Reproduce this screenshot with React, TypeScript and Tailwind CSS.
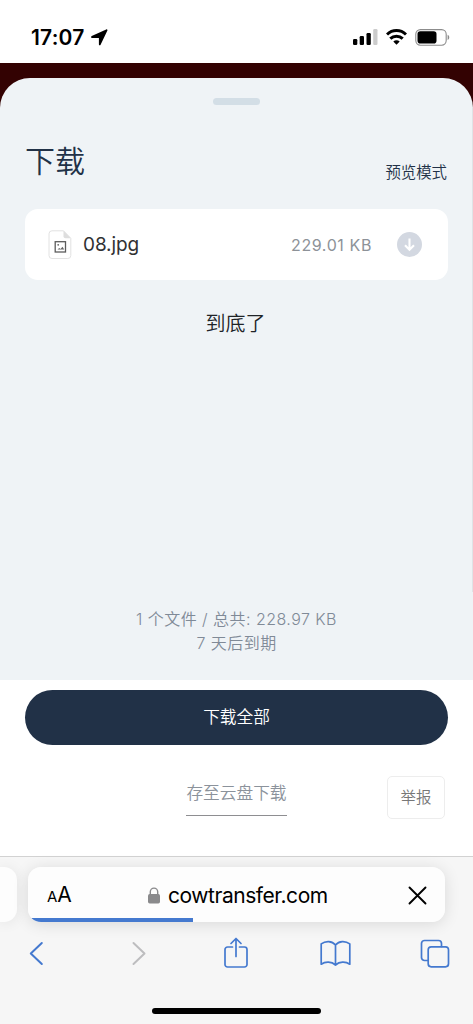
import type { ReactNode } from "react";

function StatusBar() {
  return (
    <header className="flex h-[63px] shrink-0 items-start justify-between bg-white pl-[31px] pr-[23px] text-black">
      <div className="flex items-center pt-[24px]">
        <span className="w-[54px] whitespace-nowrap text-[21px] font-semibold leading-[27px] tracking-[0.2px]">
          17:07
        </span>
        <svg className="ml-[6px] h-[17px] w-[17px]" viewBox="0 0 17 17" fill="currentColor">
          <path d="M15.200.400c.8-.3 1.500.4 1.200 1.200L9.600 15.800c-.4.9-1.700.7-1.700-.3V9H1.100C0 9-.3 7.600.7 7.100Z" />
        </svg>
      </div>

      <div className="flex items-start pt-[29px]">
        <svg className="h-[16px] w-[25px]" viewBox="0 0 25 16" fill="currentColor">
          <rect x="0" y="10" width="4.300" height="6" rx="1.200" />
          <rect x="6.700" y="7" width="4.300" height="9" rx="1.200" />
          <rect x="13.500" y="4" width="4.300" height="12" rx="1.200" />
          <rect x="20.200" y="0" width="4.300" height="16" rx="1.200" opacity="0.2" />
        </svg>
        <svg className="ml-[8px] h-[16px] w-[21px]" viewBox="0 0 21 16" fill="none" stroke="currentColor" strokeWidth="3">
          <path d="M1 5.500c5.400-5.200 13.600-5.200 19 0" />
          <path d="M4.300 9.700c3.500-3.400 8.900-3.400 12.400 0" />
          <path d="m10.500 15.700-3.200-3.200c1.800-1.600 4.600-1.600 6.400 0Z" fill="currentColor" stroke="none" />
        </svg>
        <svg className="ml-[8px] h-[17px] w-[35px]" viewBox="0 0 35 17" fill="none">
          <rect x="0.800" y="0.600" width="30.400" height="15.600" rx="4.600" stroke="#8c8c8c" strokeWidth="1.100" />
          <rect x="2.500" y="2.300" width="19" height="12.200" rx="2.800" fill="#000" />
          <path d="M32.600 5.800c2.200.8 2.200 4.400 0 5.200Z" fill="#8c8c8c" />
        </svg>
      </div>
    </header>
  );
}

function FileIcon() {
  return (
    <svg className="h-[30px] w-[24px]" viewBox="0 0 24 30" fill="none">
      <path
        d="M4 .8h11.500l7.300 7.500v17.200a3 3 0 0 1-3 3H4a3 3 0 0 1-3-3V3.800a3 3 0 0 1 3-3Z"
        fill="#fff"
        stroke="#e2e2e2"
      />
      <path d="M15.500.8v5.500a2 2 0 0 0 2 2h5.300Z" fill="#dedede" />
      <rect x="7.200" y="11.700" width="10.300" height="10.300" stroke="#5c5c5c" strokeWidth="1.300" />
      <circle cx="10.200" cy="14.800" r="0.900" fill="#666" />
      <path d="m9.500 19.600 1.700-1.500 1.300.9 2-2.200 1.700 2.800Z" fill="#666" />
    </svg>
  );
}

function FileRow() {
  return (
    <div className="mt-[29px] flex h-[71px] items-center rounded-[13px] bg-white pl-[23px] pr-[26px]">
      <FileIcon />
      <span className="ml-[11px] pt-px text-[19px] leading-6 tracking-[-0.1px] text-[#303133]">
        08.jpg
      </span>
      <span className="ml-auto mr-[25px] pt-px text-[16px] leading-6 tracking-[0.6px] text-[#8d9298]">
        229.01 KB
      </span>
      <button className="h-[25px] w-[25px]" aria-label="下载">
        <svg viewBox="0 0 25 25" fill="none">
          <circle cx="12.500" cy="12.500" r="12.500" fill="#d3d8e1" />
          <path d="M12.500 6.500v11M8 13.300l4.500 4.500 4.500-4.500" stroke="#fff" strokeWidth="2.100" />
        </svg>
      </button>
    </div>
  );
}

function DownloadSheet() {
  return (
    <div className="h-[617px] shrink-0 bg-[#330202] pt-[15px]">
      <main className="relative flex h-full flex-col rounded-t-[30px] bg-[#eff3f6] px-[25px]">
        <div className="absolute right-0 top-[30px] h-[484px] w-px bg-[#dfe3e6]" />
        <div className="mt-[20px] h-[7px] w-[47px] self-center rounded-full bg-[#d3dee6]" />
        <div className="mt-[35px] flex h-[40px] items-start justify-between">
          <h1 className="text-[30px] font-[350] leading-[43px] text-[#213147]">下载</h1>
          <button className="pr-px pt-[21px] text-[15.4px] font-[350] leading-[24px] text-[#213147]">
            预览模式
          </button>
        </div>
        <FileRow />
        <p className="mt-[30px] pr-[2px] text-center text-[20px] font-[350] leading-[28px] text-[#202327]">
          到底了
        </p>
        <div className="mt-auto pb-[25px] text-center text-[16px] font-[350] leading-[24px] tracking-[0.45px] text-[#808a97]">
          <p>1 个文件 / 总共: 228.97 KB</p>
          <p>7 天后到期</p>
        </div>
      </main>
    </div>
  );
}

function Actions() {
  return (
    <section className="h-[176px] shrink-0 bg-white px-[25px] pt-[10px]">
      <button className="h-[55px] w-full rounded-full bg-[#213147] text-[16.7px] font-[350] text-white">
        下载全部
      </button>
      <div className="mt-[31px] grid grid-cols-[1fr_auto_1fr] items-start pr-[3px]">
        <button className="col-start-2 ml-[3px] h-[40px] border-b-[1.500px] border-[#8e8e91] pb-[6px] text-[16.7px] font-[350] leading-[32px] text-[#8b929b]">
          存至云盘下载
        </button>
        <button className="h-[43px] w-[58px] justify-self-end rounded-[5px] border border-[#ededed] text-[15.4px] font-[350] text-[#777]">
          举报
        </button>
      </div>
    </section>
  );
}

function ToolbarIcon({ label, children }: { label: string; children: ReactNode }) {
  return (
    <button className="h-[34px] w-[34px]" aria-label={label}>
      <svg
        viewBox="0 0 34 34"
        fill="none"
        stroke="currentColor"
        strokeWidth="1.700"
        strokeLinecap="round"
        strokeLinejoin="round"
      >
        {children}
      </svg>
    </button>
  );
}

function BrowserBar() {
  return (
    <footer className="flex h-[168px] shrink-0 flex-col border-t border-[#d2d2d2] bg-[#f6f6f6]">
      <div className="mt-[10px] flex h-[55px] gap-[11px]">
        <div className="w-[17px] rounded-r-[13px] bg-[#fdfdfd] shadow-[0_1px_14px_rgba(0,0,0,0.08)]" />
        <div className="w-[417px] rounded-[13px] shadow-[0_2px_16px_rgba(0,0,0,0.12)]">
          <div className="flex h-full flex-col overflow-hidden rounded-[13px] bg-[#fdfdfd]">
            <div className="flex h-[51px] items-center pl-[19px] pr-[18px] pt-[5px] text-black">
              <span className="w-[38px] whitespace-nowrap pt-px leading-6">
                <span className="text-[15px]">A</span>
                <span className="text-[21px]">A</span>
              </span>
              <div className="ml-[63px] flex items-center">
                <svg className="h-[17px] w-[12px]" viewBox="0 0 12 17" fill="none">
                  <path d="M2.300 8V4.800a3.700 3.700 0 0 1 7.400 0V8" stroke="#8a8a8c" strokeWidth="1.400" />
                  <rect y="7" width="12" height="9.500" rx="1.700" fill="#8a8a8c" />
                </svg>
                <span className="ml-[8px] pt-px text-[21px] leading-6 tracking-[-0.45px]">
                  cowtransfer.com
                </span>
              </div>
              <svg className="ml-auto h-[19px] w-[19px]" viewBox="0 0 19 19" fill="none">
                <path d="m1.500 1.500 16 16m0-16-16 16" stroke="#000" strokeWidth="1.900" strokeLinecap="round" />
              </svg>
            </div>
            <div className="h-[4px] w-[165px] bg-[#4479cf]" />
          </div>
        </div>
      </div>

      <nav className="mt-[14px] flex h-[34px] justify-between pl-[19px] pr-[21px] text-[#4479cf]">
        <ToolbarIcon label="后退">
          <path d="M22.800 7 11.800 17.500l11 10.500" strokeWidth="2" />
        </ToolbarIcon>
        <ToolbarIcon label="前进">
          <path d="m14.500 7 11 10.500-11 10.500" stroke="#bdbdbf" strokeWidth="2" />
        </ToolbarIcon>
        <ToolbarIcon label="共享">
          <path d="M13.500 11H8.500a2.500 2.500 0 0 0-2.500 2.500v15A2.500 2.500 0 0 0 8.500 31h17a2.500 2.500 0 0 0 2.500-2.500v-15A2.500 2.500 0 0 0 25.500 11h-5" />
          <path d="M17 20.500V2.500m-5 5 5-5 5 5" />
        </ToolbarIcon>
        <ToolbarIcon label="书签">
          <path d="M17.500 9v20c-4-3.500-10-3.700-14.300-.8V7.900C7.500 4.600 14 4.600 17.500 9Zm0 0c3.500-4.400 10-4.400 14.300-1.100v20.300C27.500 25.300 21.500 25.500 17.500 29" />
        </ToolbarIcon>
        <ToolbarIcon label="标签页">
          <rect x="10.200" y="10.800" width="20.300" height="20" rx="3" />
          <path d="M10 24.500H6.500a3 3 0 0 1-3-3v-14a3 3 0 0 1 3-3h14a3 3 0 0 1 3 3v3" />
        </ToolbarIcon>
      </nav>
      <div className="mb-[10px] mt-auto h-[6px] w-[169px] self-center rounded-full bg-black" />
    </footer>
  );
}

export default function App() {
  return (
    <div className="flex h-[1024px] w-[473px] flex-col overflow-hidden bg-white font-['Inter','Noto_Sans_CJK_SC',sans-serif]">
      <StatusBar />
      <DownloadSheet />
      <Actions />
      <BrowserBar />
    </div>
  );
}
